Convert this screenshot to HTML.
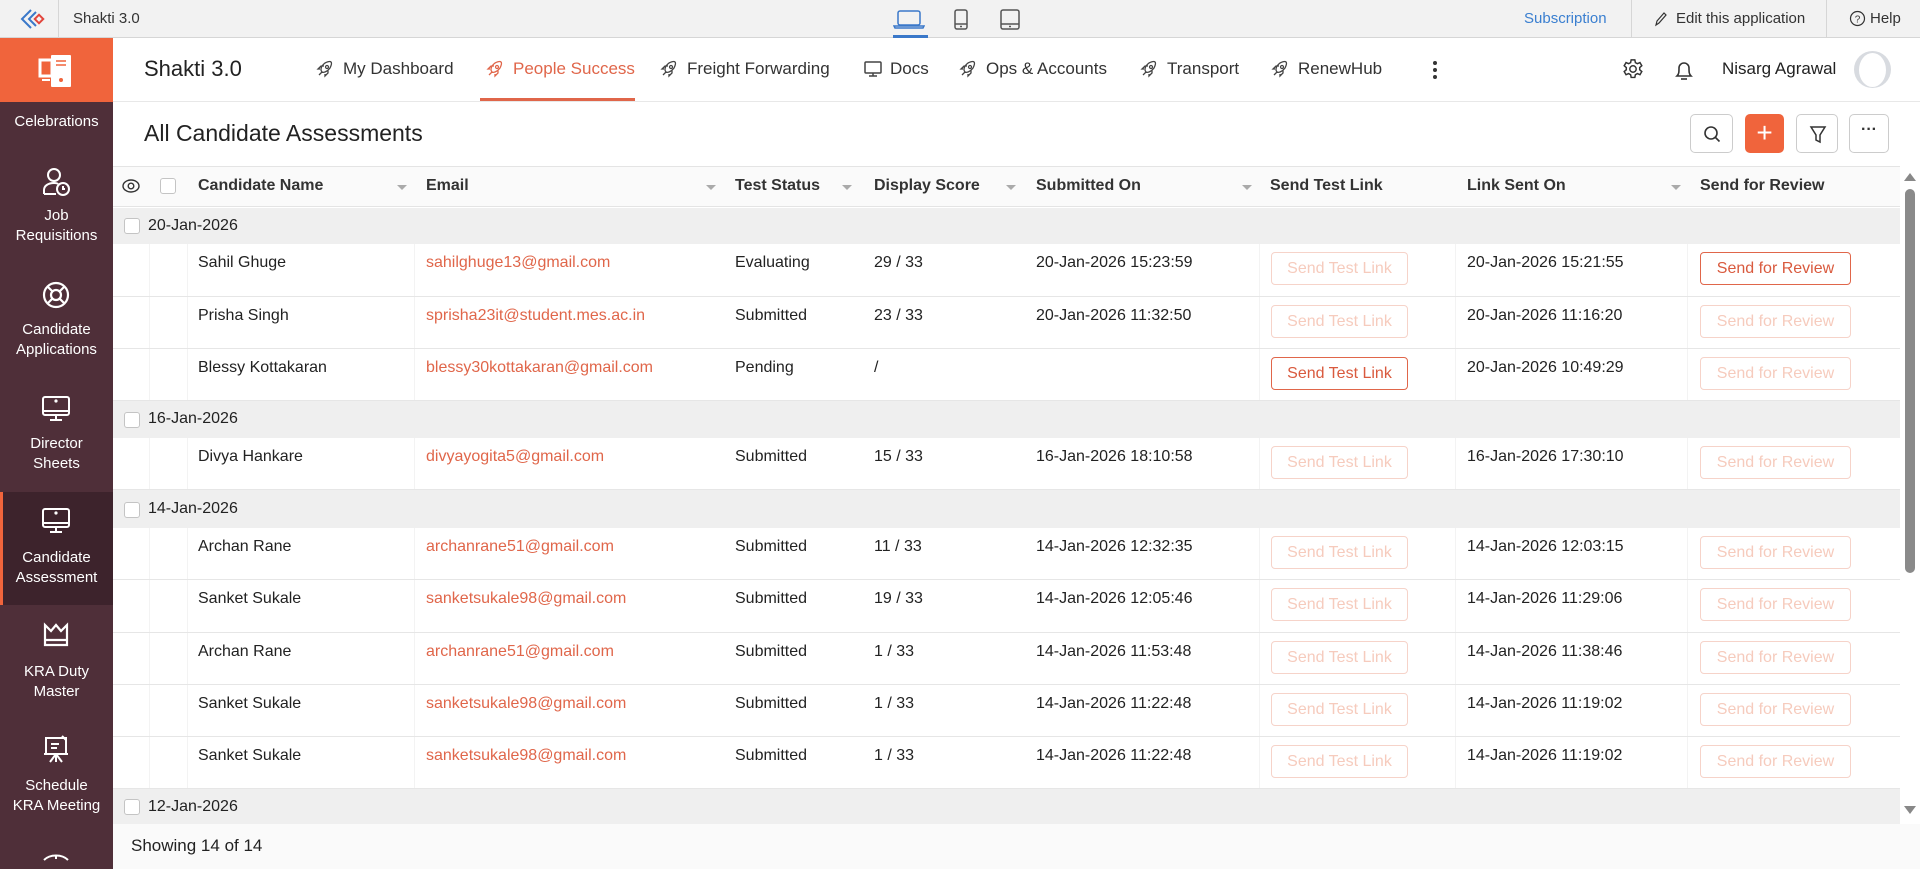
<!DOCTYPE html>
<html><head><meta charset="utf-8"><style>
*{box-sizing:border-box;margin:0;padding:0}
body{width:1920px;height:869px;overflow:hidden;font-family:"Liberation Sans",sans-serif;color:#222;background:#fff;position:relative}
.a{position:absolute}
.top{left:0;top:0;width:1920px;height:38px;background:#f2f2f2;border-bottom:1px solid #d6d6d6}
.side{left:0;top:38px;width:113px;height:831px;background:#4f2f39}
.si{position:absolute;left:0;width:113px;text-align:center;color:#fff;font-size:15px;line-height:20px}
.hdr{left:113px;top:38px;width:1807px;height:64px;background:#fff;border-bottom:1px solid #e8e8e8}
.nav{position:absolute;top:59px;font-size:17px;color:#333;white-space:nowrap}
.nav svg{position:absolute;left:-27px;top:1px}
.row{position:absolute;left:113px;width:1787px;border-bottom:1px solid #e6e6e6;background:#fff}
.grp{position:absolute;left:113px;width:1787px;background:#efefef}
.c{position:absolute;font-size:16px;line-height:20px;white-space:nowrap}
.cb{position:absolute;width:16px;height:16px;border:1px solid #c4c4c4;border-radius:3px;background:#fff}
.vl{position:absolute;top:0;bottom:0;width:1px;background:#f3f3f3}
.btn{position:absolute;height:33px;border:1px solid #f6d3c9;border-radius:4px;color:#f6cbbd;font-size:16px;line-height:31px;text-align:center;background:#fff}
.btn.on{border-color:#e0664a;color:#d95a3e}
.em{color:#e0664a}
.th{position:absolute;top:177px;font-size:16px;font-weight:bold;color:#333}
.ar{position:absolute;top:185px;width:0;height:0;border-left:5px solid transparent;border-right:5px solid transparent;border-top:5px solid #aaa}
.tb{position:absolute;top:114px;height:39px;border:1px solid #ccc;border-radius:5px;background:#fff}
</style></head><body>
<div class="a top"></div>
<svg class="a" style="left:19px;top:8px" width="26" height="22" viewBox="0 0 26 22"><path d="M12 2 L3 11 L12 20" fill="none" stroke="#3a78c9" stroke-width="2"/><path d="M17 4 L10 11 L17 18" fill="none" stroke="#3a78c9" stroke-width="2"/><rect x="17" y="8" width="6" height="6" transform="rotate(45 20 11)" fill="none" stroke="#e2453c" stroke-width="2"/></svg>
<div class="a" style="left:58px;top:0;width:1px;height:38px;background:#d6d6d6"></div>
<div class="a" style="left:73px;top:10px;font-size:15px;color:#333">Shakti 3.0</div>
<svg class="a" style="left:893px;top:9px" width="32" height="22" viewBox="0 0 32 22"><rect x="5" y="2" width="22" height="14" rx="2" fill="none" stroke="#3a78c9" stroke-width="1.5"/><path d="M1 17h30l-1 2H2z" fill="none" stroke="#3a78c9" stroke-width="1.5"/></svg>
<div class="a" style="left:893px;top:35px;width:35px;height:3px;background:#3a78c9"></div>
<svg class="a" style="left:953px;top:9px" width="16" height="22" viewBox="0 0 16 22"><rect x="2" y="1" width="12" height="19" rx="2" fill="none" stroke="#555" stroke-width="1.5"/><path d="M2 15h12M7 17.5h2" stroke="#555" stroke-width="1.5"/></svg>
<svg class="a" style="left:1000px;top:9px" width="20" height="22" viewBox="0 0 20 22"><rect x="1" y="1" width="18" height="19" rx="2" fill="none" stroke="#555" stroke-width="1.5"/><path d="M1 15h18M9 17.5h2" stroke="#555" stroke-width="1.5"/></svg>
<div class="a" style="left:1524px;top:10px;font-size:15px;color:#3a7fd0">Subscription</div>
<div class="a" style="left:1631px;top:0;width:1px;height:38px;background:#d6d6d6"></div>
<svg class="a" style="left:1654px;top:11px" width="14" height="16" viewBox="0 0 14 16"><path d="M2 14 L3 10 L10 2 L12 4 L5 12 Z" fill="none" stroke="#333" stroke-width="1.2"/></svg>
<div class="a" style="left:1676px;top:10px;font-size:15px;color:#333">Edit this application</div>
<div class="a" style="left:1826px;top:0;width:1px;height:38px;background:#d6d6d6"></div>
<svg class="a" style="left:1849px;top:10px" width="17" height="17" viewBox="0 0 17 17"><circle cx="8.5" cy="8.5" r="7" fill="none" stroke="#333" stroke-width="1.2"/><text x="8.5" y="12.5" font-size="10" text-anchor="middle" font-family="Liberation Sans" fill="#333">?</text></svg>
<div class="a" style="left:1870px;top:10px;font-size:15px;color:#333">Help</div>

<div class="a side"></div>
<div class="a" style="left:0;top:38px;width:113px;height:64px;background:#f0643c"></div>
<svg class="a" style="left:38px;top:54px" width="36" height="34" viewBox="0 0 36 34"><rect x="2" y="6" width="12" height="16" fill="none" stroke="#fff" stroke-width="3"/><path d="M4 26h8" stroke="#fff" stroke-width="2"/><rect x="13" y="1" width="20" height="32" rx="1" fill="#fff"/><path d="M18 7h10M18 11h10" stroke="#f0643c" stroke-width="1.5"/><circle cx="23" cy="26" r="2" fill="#f0643c"/></svg>
<div class="si" style="top:112px">Celebrations</div>
<svg class="a" style="left:42px;top:167px" width="30" height="30" viewBox="0 0 30 30" fill="none" stroke="#fff" stroke-width="2"><circle cx="12" cy="8" r="6"/><path d="M2 27v-4c0-4 4-7 10-7 2 0 3 0 4 1"/><path d="M2 27h12"/><circle cx="21" cy="22" r="6"/><path d="M21 19v3h2"/></svg>
<div class="si" style="top:206px">Job<br>Requisitions</div>
<svg class="a" style="left:42px;top:281px" width="28" height="28" viewBox="0 0 28 28" fill="none" stroke="#fff" stroke-width="2.2"><circle cx="14" cy="14" r="12"/><circle cx="14" cy="14" r="5"/><path d="M5.5 5.5l5 5M22.5 5.5l-5 5M5.5 22.5l5-5M22.5 22.5l-5-5"/></svg>
<div class="si" style="top:320px">Candidate<br>Applications</div>
<svg class="a" style="left:41px;top:395px" width="30" height="28" viewBox="0 0 30 28" fill="none" stroke="#fff" stroke-width="2"><rect x="2" y="2" width="26" height="18" rx="2"/><path d="M2 16h26M15 20v4M9 25h12"/><circle cx="15" cy="6" r=".6" fill="#fff"/></svg>
<div class="si" style="top:434px">Director<br>Sheets</div>
<div class="a" style="left:0;top:492px;width:113px;height:113px;background:#3d232c"></div>
<div class="a" style="left:0;top:492px;width:3px;height:113px;background:#f0643c"></div>
<svg class="a" style="left:41px;top:507px" width="30" height="28" viewBox="0 0 30 28" fill="none" stroke="#fff" stroke-width="2"><rect x="2" y="2" width="26" height="18" rx="2"/><path d="M2 16h26M15 20v4M9 25h12"/><circle cx="15" cy="6" r=".6" fill="#fff"/></svg>
<div class="si" style="top:548px">Candidate<br>Assessment</div>
<svg class="a" style="left:42px;top:622px" width="28" height="26" viewBox="0 0 28 26" fill="none" stroke="#fff" stroke-width="2.2"><path d="M3 3v20h22V3l-6 6-5-6-5 6z"/><path d="M3 18h22"/></svg>
<div class="si" style="top:662px">KRA Duty<br>Master</div>
<svg class="a" style="left:42px;top:734px" width="28" height="30" viewBox="0 0 28 30" fill="none" stroke="#fff" stroke-width="2"><rect x="4" y="4" width="20" height="16"/><path d="M2 20h24M9 10h8M9 14h6M14 20l-6 8M14 20l6 8M14 20v8M20 2l4 4"/></svg>
<div class="si" style="top:776px">Schedule<br>KRA Meeting</div>
<svg class="a" style="left:42px;top:850px" width="28" height="19" viewBox="0 0 28 19" fill="none" stroke="#fff" stroke-width="2"><path d="M2 10c6-6 18-6 24 0M14 6v3"/></svg>

<div class="a hdr"></div>
<div class="a" style="left:144px;top:56px;font-size:22px;color:#222">Shakti 3.0</div>
<svg width="0" height="0" style="position:absolute"><defs><symbol id="rk" viewBox="0 0 18 18"><path d="M6 12c-2-2-1-6 3-9 2-1 5-2 6-1 1 1 0 4-1 6-3 4-7 5-8 4zM6 12l-3 3M4 9L2 9l3-3 3 0M9 14l0 2 3-3 0-3" fill="none" stroke="currentColor" stroke-width="1.3"/><circle cx="11" cy="7" r="1.5" fill="none" stroke="currentColor" stroke-width="1.2"/></symbol></defs></svg>
<div class="nav" style="left:343px"><svg width="18" height="18" style="color:#444"><use href="#rk"/></svg>My Dashboard</div>
<div class="nav" style="left:513px;color:#e0664a"><svg width="18" height="18" style="color:#e0664a"><use href="#rk"/></svg>People Success</div>
<div class="a" style="left:480px;top:98px;width:155px;height:3px;background:#e0664a"></div>
<div class="nav" style="left:687px"><svg width="18" height="18" style="color:#444"><use href="#rk"/></svg>Freight Forwarding</div>
<div class="nav" style="left:890px"><svg width="20" height="18" viewBox="0 0 20 18" style="color:#444" fill="none" stroke="#444" stroke-width="1.5"><rect x="2" y="2" width="16" height="11" rx="1"/><path d="M6 16h8M10 13v3"/></svg>Docs</div>
<div class="nav" style="left:986px"><svg width="18" height="18" style="color:#444"><use href="#rk"/></svg>Ops &amp; Accounts</div>
<div class="nav" style="left:1167px"><svg width="18" height="18" style="color:#444"><use href="#rk"/></svg>Transport</div>
<div class="nav" style="left:1298px"><svg width="18" height="18" style="color:#444"><use href="#rk"/></svg>RenewHub</div>
<svg class="a" style="left:1431px;top:59px" width="8" height="22" viewBox="0 0 8 22"><circle cx="4" cy="4" r="2" fill="#333"/><circle cx="4" cy="11" r="2" fill="#333"/><circle cx="4" cy="18" r="2" fill="#333"/></svg>
<svg class="a" style="left:1622px;top:58px" width="22" height="22" viewBox="0 0 24 24" fill="none" stroke="#333" stroke-width="1.6"><circle cx="12" cy="12" r="3.5"/><path d="M10 2h4l.6 3 2.2 1.2 2.8-1.2 2 3.4-2.3 2v2.4l2.3 2-2 3.4-2.8-1.2-2.2 1.2-.6 3h-4l-.6-3-2.2-1.2-2.8 1.2-2-3.4 2.3-2v-2.4l-2.3-2 2-3.4 2.8 1.2L9.4 5z"/></svg>
<svg class="a" style="left:1674px;top:58px" width="20" height="24" viewBox="0 0 20 24" fill="none" stroke="#333" stroke-width="1.6"><path d="M3 18c2-2 2-4 2-8a5 5 0 0110 0c0 4 0 6 2 8z"/><path d="M7 21h6"/></svg>
<div class="a" style="left:1722px;top:59px;font-size:17px;color:#222">Nisarg Agrawal</div>
<div class="a" style="left:1854px;top:51px;width:37px;height:37px;border-radius:50%;background:#d8dbe0;overflow:hidden"><div style="position:absolute;left:5px;top:2px;width:27px;height:34px;border-radius:50%;background:#fff"></div></div>

<div class="a" style="left:144px;top:120px;font-size:23px;color:#222">All Candidate Assessments</div>
<div class="tb" style="left:1690px;width:43px"><svg style="position:absolute;left:11px;top:9px" width="20" height="20" viewBox="0 0 20 20" fill="none" stroke="#333" stroke-width="1.6"><circle cx="9" cy="9" r="6"/><path d="M13.5 13.5l4 4"/></svg></div>
<div class="tb" style="left:1745px;width:39px;background:#f0643c;border-color:#f0643c;color:#fff;font-size:28px;line-height:35px;text-align:center">+</div>
<div class="tb" style="left:1796px;width:42px"><svg style="position:absolute;left:12px;top:10px" width="18" height="20" viewBox="0 0 18 20" fill="none" stroke="#333" stroke-width="1.5"><path d="M2 2h14l-5 8v7l-4-2v-5z"/></svg></div>
<div class="tb" style="left:1849px;width:40px;font-size:16px;text-align:center;line-height:30px;color:#333;font-weight:bold">···</div>

<div class="a" style="left:113px;top:166px;width:1787px;height:41px;background:#fafafa;border-top:1px solid #e4e4e4;border-bottom:1px solid #e4e4e4"></div>
<svg class="a" style="left:122px;top:178px" width="18" height="16" viewBox="0 0 18 16" fill="none" stroke="#333" stroke-width="1.4"><ellipse cx="9" cy="8" rx="8" ry="6"/><circle cx="9" cy="8" r="2.8"/></svg>
<div class="cb" style="left:160px;top:178px"></div>
<div class="th" style="left:198px">Candidate Name</div><div class="ar" style="left:397px"></div>
<div class="th" style="left:426px">Email</div><div class="ar" style="left:706px"></div>
<div class="th" style="left:735px">Test Status</div><div class="ar" style="left:842px"></div>
<div class="th" style="left:874px">Display Score</div><div class="ar" style="left:1006px"></div>
<div class="th" style="left:1036px">Submitted On</div><div class="ar" style="left:1242px"></div>
<div class="th" style="left:1270px">Send Test Link</div>
<div class="th" style="left:1467px">Link Sent On</div><div class="ar" style="left:1671px"></div>
<div class="th" style="left:1700px">Send for Review</div>

<div class="grp" style="top:208px;height:36px"><div class="cb" style="left:11px;top:10px"></div><div class="c" style="left:35px;top:8px">20-Jan-2026</div></div>
<div class="grp" style="top:401px;height:37px"><div class="cb" style="left:11px;top:11px"></div><div class="c" style="left:35px;top:8px">16-Jan-2026</div></div>
<div class="grp" style="top:490px;height:38px"><div class="cb" style="left:11px;top:12px"></div><div class="c" style="left:35px;top:9px">14-Jan-2026</div></div>
<div class="grp" style="top:789px;height:35px"><div class="cb" style="left:11px;top:10px"></div><div class="c" style="left:35px;top:8px">12-Jan-2026</div></div>

<div class="row" style="top:244px;height:53px"><div class="vl" style="left:36px"></div><div class="vl" style="left:74px"></div><div class="vl" style="left:301px"></div><div class="vl" style="left:1146px"></div><div class="vl" style="left:1342px"></div><div class="vl" style="left:1574px"></div>
<div class="c" style="left:85px;top:9px">Sahil Ghuge</div><div class="c em" style="left:313px;top:9px">sahilghuge13@gmail.com</div><div class="c" style="left:622px;top:9px">Evaluating</div><div class="c" style="left:761px;top:9px">29 / 33</div><div class="c" style="left:923px;top:9px">20-Jan-2026 15:23:59</div><div class="btn" style="left:1158px;top:8px;width:137px">Send Test Link</div><div class="c" style="left:1354px;top:9px">20-Jan-2026 15:21:55</div><div class="btn on" style="left:1587px;top:8px;width:151px">Send for Review</div></div>
<div class="row" style="top:297px;height:52px"><div class="vl" style="left:36px"></div><div class="vl" style="left:74px"></div><div class="vl" style="left:301px"></div><div class="vl" style="left:1146px"></div><div class="vl" style="left:1342px"></div><div class="vl" style="left:1574px"></div>
<div class="c" style="left:85px;top:9px">Prisha Singh</div><div class="c em" style="left:313px;top:9px">sprisha23it@student.mes.ac.in</div><div class="c" style="left:622px;top:9px">Submitted</div><div class="c" style="left:761px;top:9px">23 / 33</div><div class="c" style="left:923px;top:9px">20-Jan-2026 11:32:50</div><div class="btn" style="left:1158px;top:8px;width:137px">Send Test Link</div><div class="c" style="left:1354px;top:9px">20-Jan-2026 11:16:20</div><div class="btn" style="left:1587px;top:8px;width:151px">Send for Review</div></div>
<div class="row" style="top:349px;height:52px"><div class="vl" style="left:36px"></div><div class="vl" style="left:74px"></div><div class="vl" style="left:301px"></div><div class="vl" style="left:1146px"></div><div class="vl" style="left:1342px"></div><div class="vl" style="left:1574px"></div>
<div class="c" style="left:85px;top:9px">Blessy Kottakaran</div><div class="c em" style="left:313px;top:9px">blessy30kottakaran@gmail.com</div><div class="c" style="left:622px;top:9px">Pending</div><div class="c" style="left:761px;top:9px">/</div><div class="btn on" style="left:1158px;top:8px;width:137px">Send Test Link</div><div class="c" style="left:1354px;top:9px">20-Jan-2026 10:49:29</div><div class="btn" style="left:1587px;top:8px;width:151px">Send for Review</div></div>
<div class="row" style="top:438px;height:52px"><div class="vl" style="left:36px"></div><div class="vl" style="left:74px"></div><div class="vl" style="left:301px"></div><div class="vl" style="left:1146px"></div><div class="vl" style="left:1342px"></div><div class="vl" style="left:1574px"></div>
<div class="c" style="left:85px;top:9px">Divya Hankare</div><div class="c em" style="left:313px;top:9px">divyayogita5@gmail.com</div><div class="c" style="left:622px;top:9px">Submitted</div><div class="c" style="left:761px;top:9px">15 / 33</div><div class="c" style="left:923px;top:9px">16-Jan-2026 18:10:58</div><div class="btn" style="left:1158px;top:8px;width:137px">Send Test Link</div><div class="c" style="left:1354px;top:9px">16-Jan-2026 17:30:10</div><div class="btn" style="left:1587px;top:8px;width:151px">Send for Review</div></div>
<div class="row" style="top:528px;height:52px"><div class="vl" style="left:36px"></div><div class="vl" style="left:74px"></div><div class="vl" style="left:301px"></div><div class="vl" style="left:1146px"></div><div class="vl" style="left:1342px"></div><div class="vl" style="left:1574px"></div>
<div class="c" style="left:85px;top:9px">Archan Rane</div><div class="c em" style="left:313px;top:9px">archanrane51@gmail.com</div><div class="c" style="left:622px;top:9px">Submitted</div><div class="c" style="left:761px;top:9px">11 / 33</div><div class="c" style="left:923px;top:9px">14-Jan-2026 12:32:35</div><div class="btn" style="left:1158px;top:8px;width:137px">Send Test Link</div><div class="c" style="left:1354px;top:9px">14-Jan-2026 12:03:15</div><div class="btn" style="left:1587px;top:8px;width:151px">Send for Review</div></div>
<div class="row" style="top:580px;height:53px"><div class="vl" style="left:36px"></div><div class="vl" style="left:74px"></div><div class="vl" style="left:301px"></div><div class="vl" style="left:1146px"></div><div class="vl" style="left:1342px"></div><div class="vl" style="left:1574px"></div>
<div class="c" style="left:85px;top:9px">Sanket Sukale</div><div class="c em" style="left:313px;top:9px">sanketsukale98@gmail.com</div><div class="c" style="left:622px;top:9px">Submitted</div><div class="c" style="left:761px;top:9px">19 / 33</div><div class="c" style="left:923px;top:9px">14-Jan-2026 12:05:46</div><div class="btn" style="left:1158px;top:8px;width:137px">Send Test Link</div><div class="c" style="left:1354px;top:9px">14-Jan-2026 11:29:06</div><div class="btn" style="left:1587px;top:8px;width:151px">Send for Review</div></div>
<div class="row" style="top:633px;height:52px"><div class="vl" style="left:36px"></div><div class="vl" style="left:74px"></div><div class="vl" style="left:301px"></div><div class="vl" style="left:1146px"></div><div class="vl" style="left:1342px"></div><div class="vl" style="left:1574px"></div>
<div class="c" style="left:85px;top:9px">Archan Rane</div><div class="c em" style="left:313px;top:9px">archanrane51@gmail.com</div><div class="c" style="left:622px;top:9px">Submitted</div><div class="c" style="left:761px;top:9px">1 / 33</div><div class="c" style="left:923px;top:9px">14-Jan-2026 11:53:48</div><div class="btn" style="left:1158px;top:8px;width:137px">Send Test Link</div><div class="c" style="left:1354px;top:9px">14-Jan-2026 11:38:46</div><div class="btn" style="left:1587px;top:8px;width:151px">Send for Review</div></div>
<div class="row" style="top:685px;height:52px"><div class="vl" style="left:36px"></div><div class="vl" style="left:74px"></div><div class="vl" style="left:301px"></div><div class="vl" style="left:1146px"></div><div class="vl" style="left:1342px"></div><div class="vl" style="left:1574px"></div>
<div class="c" style="left:85px;top:9px">Sanket Sukale</div><div class="c em" style="left:313px;top:9px">sanketsukale98@gmail.com</div><div class="c" style="left:622px;top:9px">Submitted</div><div class="c" style="left:761px;top:9px">1 / 33</div><div class="c" style="left:923px;top:9px">14-Jan-2026 11:22:48</div><div class="btn" style="left:1158px;top:8px;width:137px">Send Test Link</div><div class="c" style="left:1354px;top:9px">14-Jan-2026 11:19:02</div><div class="btn" style="left:1587px;top:8px;width:151px">Send for Review</div></div>
<div class="row" style="top:737px;height:52px"><div class="vl" style="left:36px"></div><div class="vl" style="left:74px"></div><div class="vl" style="left:301px"></div><div class="vl" style="left:1146px"></div><div class="vl" style="left:1342px"></div><div class="vl" style="left:1574px"></div>
<div class="c" style="left:85px;top:9px">Sanket Sukale</div><div class="c em" style="left:313px;top:9px">sanketsukale98@gmail.com</div><div class="c" style="left:622px;top:9px">Submitted</div><div class="c" style="left:761px;top:9px">1 / 33</div><div class="c" style="left:923px;top:9px">14-Jan-2026 11:22:48</div><div class="btn" style="left:1158px;top:8px;width:137px">Send Test Link</div><div class="c" style="left:1354px;top:9px">14-Jan-2026 11:19:02</div><div class="btn" style="left:1587px;top:8px;width:151px">Send for Review</div></div>

<div class="a" style="left:113px;top:824px;width:1807px;height:45px;background:#fafafa"></div>
<div class="a" style="left:131px;top:836px;font-size:17px;color:#222">Showing 14 of 14</div>

<div class="a" style="left:1900px;top:166px;width:20px;height:658px;background:#fff"></div>
<div class="a" style="left:1904px;top:173px;width:0;height:0;border-left:6px solid transparent;border-right:6px solid transparent;border-bottom:8px solid #888"></div>
<div class="a" style="left:1905px;top:189px;width:10px;height:384px;border-radius:5px;background:#8a8a8a"></div>
<div class="a" style="left:1904px;top:806px;width:0;height:0;border-left:6px solid transparent;border-right:6px solid transparent;border-top:8px solid #888"></div>
</body></html>
